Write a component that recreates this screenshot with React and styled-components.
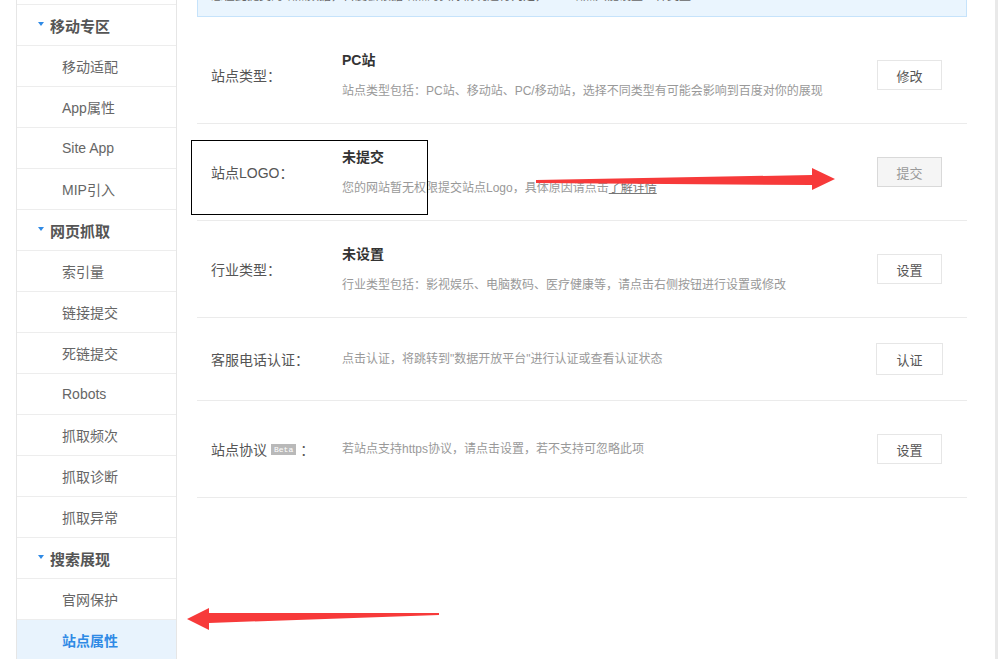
import React from 'react';
import styled, { createGlobalStyle } from 'styled-components';

const GlobalStyle = createGlobalStyle`
  html, body {
    margin: 0;
    padding: 0;
    background: #fff;
  }
  body {
    font-family: "Liberation Sans", Arial, "Noto Sans CJK SC", sans-serif;
    font-size: 12px;
    color: #666;
  }
`;

const Page = styled.div`
  position: relative;
  height: 659px;
  overflow: hidden;
`;

const Layout = styled.div`
  display: flex;
  align-items: flex-start;
  gap: 20px;
  width: 999px;
  min-height: 680px;
  padding-left: 16px;
  box-sizing: border-box;
  border-right: 1px solid #fff;
  box-shadow: inset -3px 0 0 #e9e9e9, inset -1px 0 0 #fff;
`;

const Sidebar = styled.div`
  flex-shrink: 0;
  width: 161px;
  min-height: 680px;
  padding-top: 4px;
  box-sizing: border-box;
  border-left: 1px solid #e6e6e6;
  border-right: 1px solid #e6e6e6;
`;

const MenuList = styled.div`
  border-top: 1px solid #ededed;
`;

const menuRow = `
  display: flex;
  align-items: center;
  height: 40px;
  border-bottom: 1px solid #ededed;
  font-family: "Liberation Sans", Arial, "Noto Sans CJK SC", sans-serif;
`;

const MenuHeader = styled.div`
  ${menuRow}
  padding-left: 21px;
  gap: 6px;
  font-size: 15px;
  font-weight: bold;
  color: #555;
`;

const Caret = styled.span`
  width: 0;
  height: 0;
  border-left: 3.5px solid transparent;
  border-right: 3.5px solid transparent;
  border-top: 4px solid #2f8ae5;
  margin-top: -2px;
`;

const MenuItem = styled.div`
  ${menuRow}
  padding-left: 45px;
  padding-bottom: 1px;
  box-sizing: border-box;
  height: 41px;
  font-size: 14px;
  color: ${(p) => (p.$active ? '#2f8ae5' : '#666')};
  font-weight: ${(p) => (p.$active ? 'bold' : 'normal')};
  background: ${(p) => (p.$active ? '#e8f3fd' : 'transparent')};
`;

const Main = styled.div`
  flex-shrink: 0;
  width: 770px;
`;

// the notice sits partly above the top edge, as in a scrolled page
const Notice = styled.div`
  margin: -25px 0 10px;
  padding: 10px 13px;
  line-height: 20px;
  font-size: 12px;
  color: #666;
  background: #eaf5fe;
  border: 1px solid #c6e3fb;
`;

const SettingRow = styled.div`
  display: flex;
  align-items: center;
  height: ${(p) => (p.$compact ? 82 : 96)}px;
  border-bottom: 1px solid #ebebeb;
`;

const Label = styled.div`
  flex-shrink: 0;
  width: 145px;
  padding-left: 14px;
  box-sizing: border-box;
  font-size: 14px;
  color: #555;
  display: flex;
  align-items: center;
`;

const Badge = styled.span`
  display: inline-block;
  height: 11px;
  line-height: 11px;
  padding: 0 3px;
  margin: 0 4px;
  background: #b9b9b9;
  color: #fff;
  font-size: 8px;
  font-family: "Liberation Mono", "DejaVu Sans Mono", monospace;
`;

const Info = styled.div`
  flex: 1;
`;

const Title = styled.div`
  font-size: 14px;
  font-weight: bold;
  color: #333;
  line-height: 20px;
  margin-bottom: 11px;
`;

const Desc = styled.div`
  font-size: 12px;
  color: #999;
  line-height: 20px;
`;

const DetailLink = styled.a`
  color: #777;
  text-decoration: underline;
`;

const ActionButton = styled.button`
  flex-shrink: 0;
  width: ${(p) => (p.$large ? 67 : 65)}px;
  height: ${(p) => (p.$large ? 32 : 30)}px;
  margin-right: ${(p) => (p.$large ? 24 : 25)}px;
  padding: 0;
  font-family: "Liberation Sans", Arial, "Noto Sans CJK SC", sans-serif;
  font-size: 13px;
  color: ${(p) => (p.$disabled ? '#999' : '#555')};
  background: ${(p) => (p.$disabled ? '#f5f5f5' : '#fff')};
  border: 1px solid ${(p) => (p.$disabled ? '#d9d9d9' : '#e6e6e6')};
  cursor: ${(p) => (p.$disabled ? 'default' : 'pointer')};
`;

// annotation layer: a black frame and two red arrows over the page
const Frame = styled.div`
  position: absolute;
  left: 191px;
  top: 140px;
  width: 237px;
  height: 75px;
  box-sizing: border-box;
  border: 1px solid #000;
  pointer-events: none;
`;

const Marks = styled.svg`
  position: absolute;
  left: 0;
  top: 0;
  pointer-events: none;
`;

const menu = [
  { title: '移动专区', items: ['移动适配', 'App属性', 'Site App', 'MIP引入'] },
  {
    title: '网页抓取',
    items: ['索引量', '链接提交', '死链提交', 'Robots', '抓取频次', '抓取诊断', '抓取异常'],
  },
  { title: '搜索展现', items: ['官网保护', '站点属性'] },
];

const ACTIVE = '站点属性';

const settings = [
  {
    label: '站点类型：',
    title: 'PC站',
    desc: '站点类型包括：PC站、移动站、PC/移动站，选择不同类型有可能会影响到百度对你的展现',
    action: '修改',
  },
  {
    label: '站点LOGO：',
    title: '未提交',
    desc: (
      <>
        您的网站暂无权限提交站点Logo，具体原因请点击<DetailLink href="#">了解详情</DetailLink>
      </>
    ),
    action: '提交',
    disabled: true,
  },
  {
    label: '行业类型：',
    title: '未设置',
    desc: '行业类型包括：影视娱乐、电脑数码、医疗健康等，请点击右侧按钮进行设置或修改',
    action: '设置',
  },
  {
    label: '客服电话认证：',
    desc: '点击认证，将跳转到"数据开放平台"进行认证或查看认证状态',
    action: '认证',
    compact: true,
  },
  {
    label: (
      <>
        站点协议<Badge>Beta</Badge>：
      </>
    ),
    desc: '若站点支持https协议，请点击设置，若不支持可忽略此项',
    action: '设置',
  },
];

function App() {
  return (
    <Page>
      <GlobalStyle />
      <Layout>
        <Sidebar>
          <MenuList>
            {menu.map((group) => (
              <React.Fragment key={group.title}>
                <MenuHeader>
                  <Caret />
                  {group.title}
                </MenuHeader>
                {group.items.map((item) => (
                  <MenuItem key={item} $active={item === ACTIVE}>
                    {item}
                  </MenuItem>
                ))}
              </React.Fragment>
            ))}
          </MenuList>
        </Sidebar>

        <Main>
          <Notice>
            您在此提交的站点数据，百度会根据站点的实际情况进行判定，一个站点只能设置一种类型
          </Notice>
          {settings.map((row, i) => (
            <SettingRow key={i} $compact={row.compact}>
              <Label>{row.label}</Label>
              <Info>
                {row.title && <Title>{row.title}</Title>}
                <Desc>{row.desc}</Desc>
              </Info>
              <ActionButton $disabled={row.disabled} $large={row.compact}>
                {row.action}
              </ActionButton>
            </SettingRow>
          ))}
        </Main>
      </Layout>

      <Frame />
      <Marks viewBox="0 0 999 659" width="999" height="659">
        <polygon
          points="536,180 812,175 812,168 835,179 812,190 812,185 536,183"
          fill="#f73a3a"
        />
        <polygon
          points="439,613 209,613 209,608 187,619 209,630 209,623 439,615"
          fill="#f73a3a"
        />
      </Marks>
    </Page>
  );
}

export default App;
